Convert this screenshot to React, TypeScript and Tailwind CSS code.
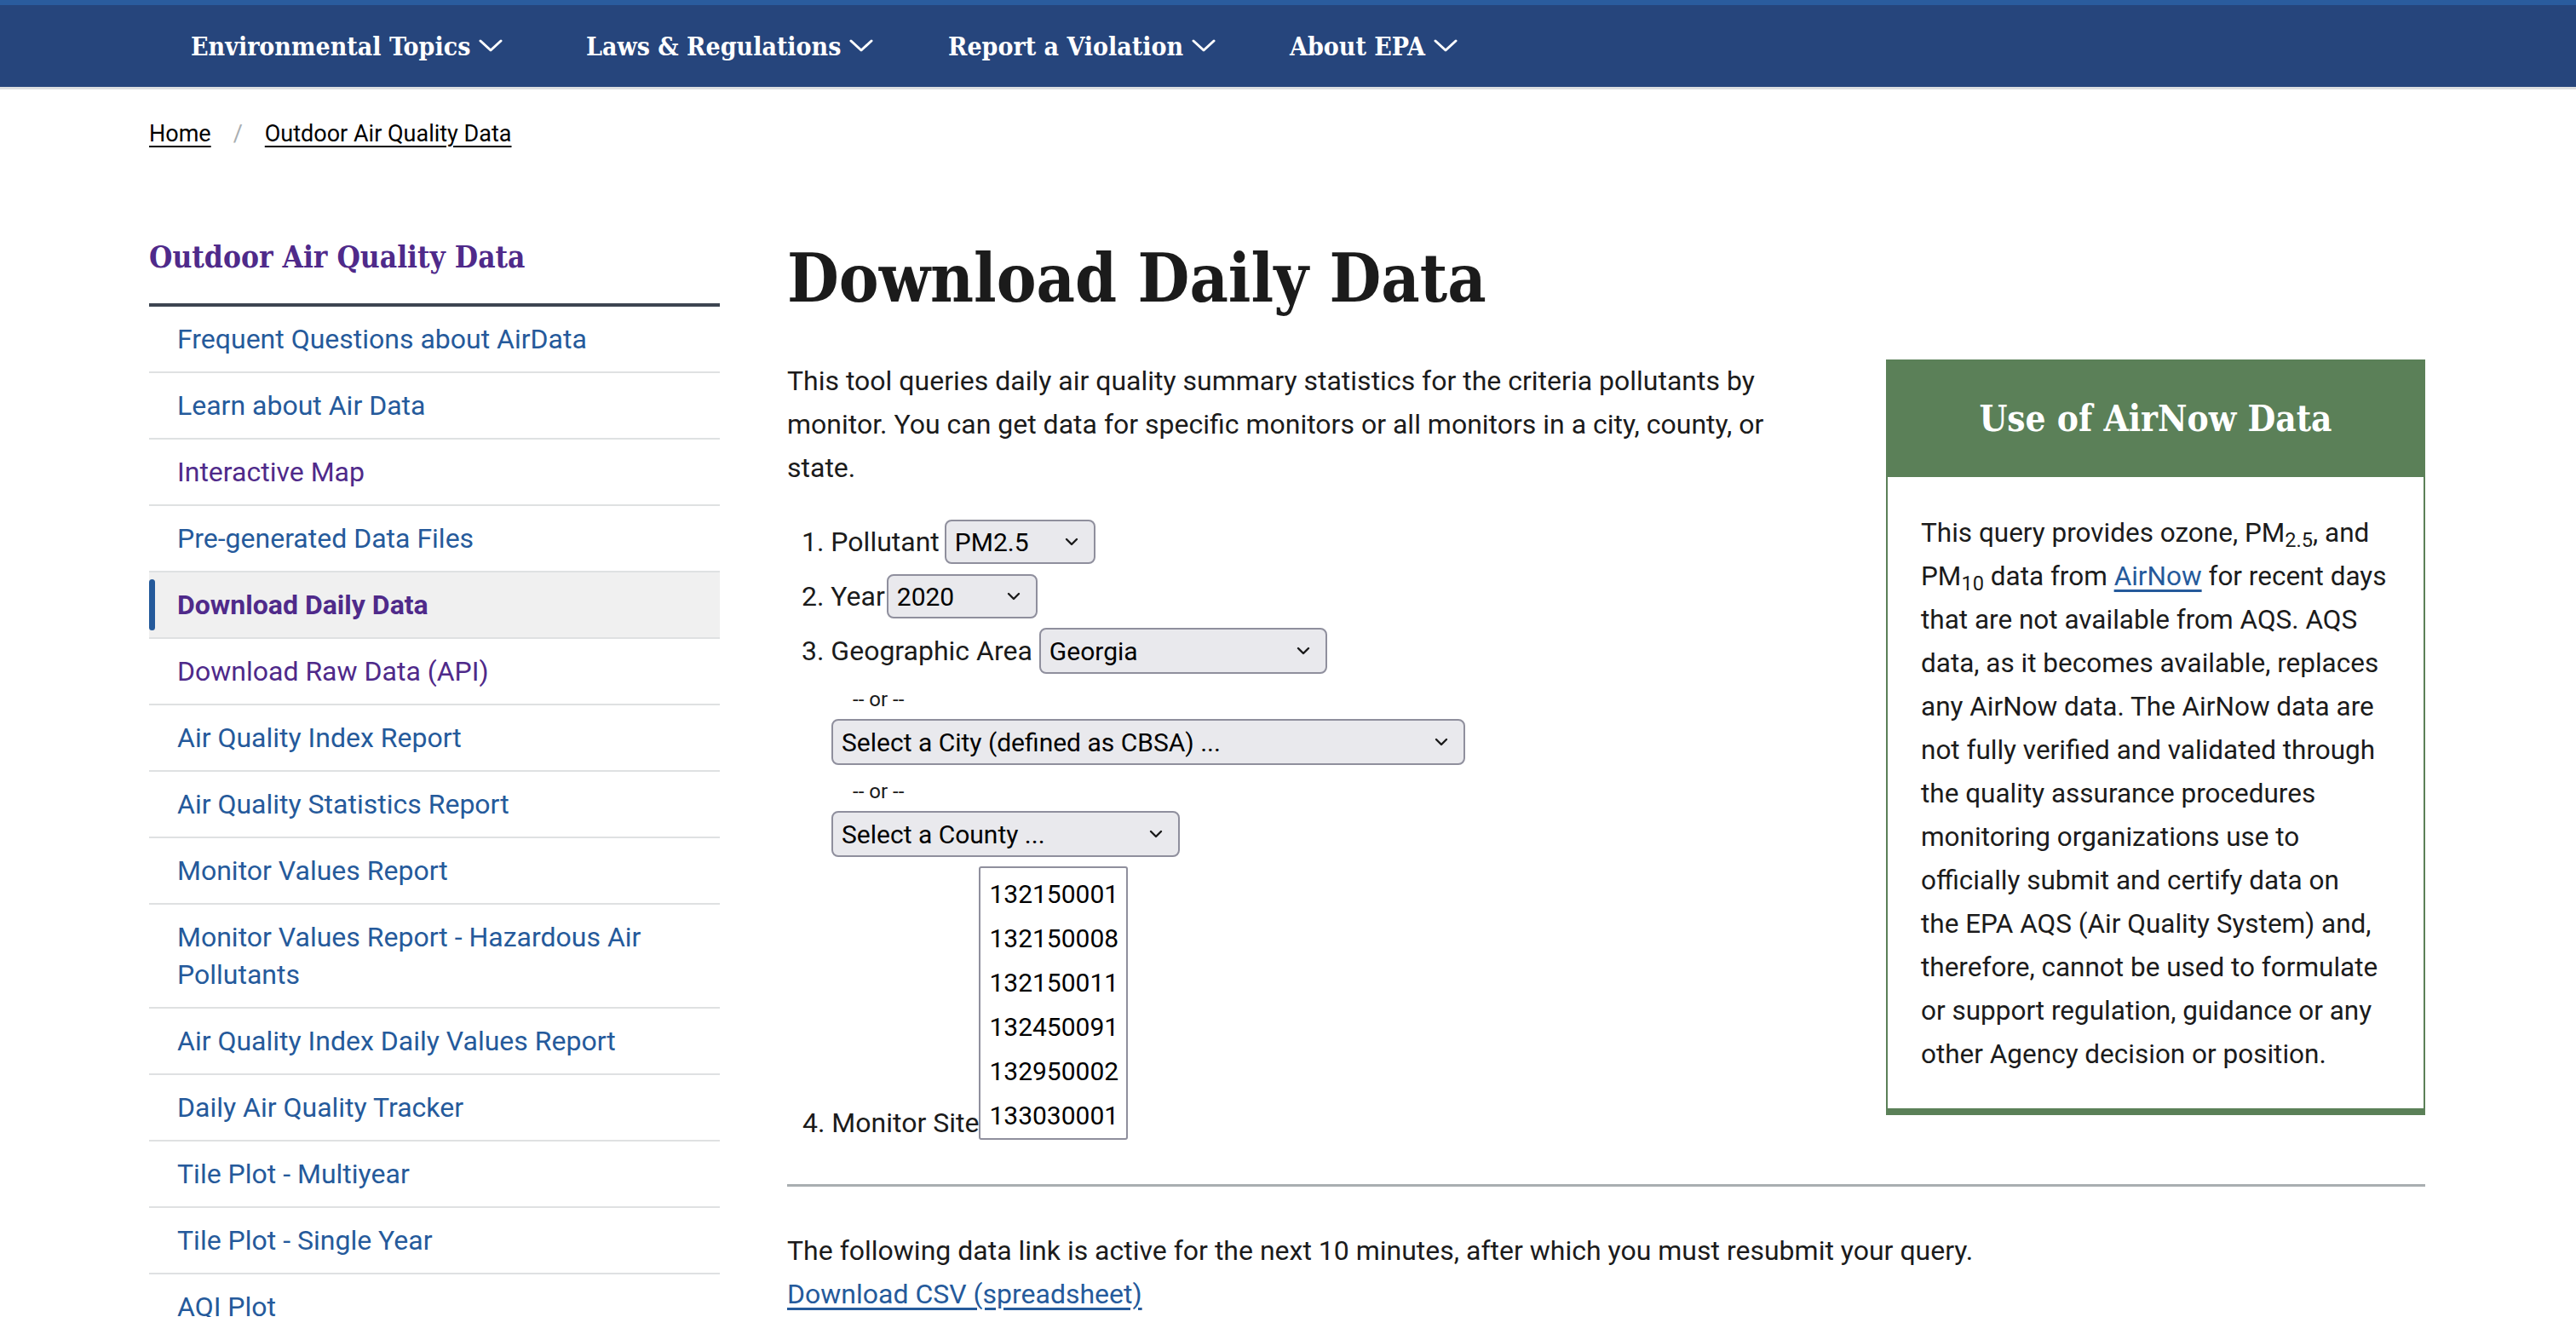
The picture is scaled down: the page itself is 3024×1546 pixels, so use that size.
import React from 'react'

const serif = "font-['DejaVu_Serif_Condensed','DejaVu_Serif',serif]"
const sans = "font-['Roboto',sans-serif]"

function NavChevron() {
  return (
    <svg width="28" height="16" viewBox="0 0 28 16" fill="none" className="ml-[10px]">
      <path d="M2 2 L14 13 L26 2" stroke="white" strokeWidth="3" strokeLinecap="round" strokeLinejoin="round" />
    </svg>
  )
}

function SelectChevron() {
  return (
    <svg width="16" height="10" viewBox="0 0 16 10" fill="none">
      <path d="M2 2 L8 8 L14 2" stroke="#1b1b1b" strokeWidth="2.4" strokeLinecap="round" strokeLinejoin="round" />
    </svg>
  )
}

function FakeSelect({ value, width, height = 'h-[52px]' }: { value: string; width: string; height?: string }) {
  return (
    <div className={`${width} ${height} flex items-center justify-between pl-[10px] pr-[18px] bg-[#e9e9ed] border-2 border-[#8f8f9d] rounded-[8px] text-[30px] text-black`}>
      <span>{value}</span>
      <SelectChevron />
    </div>
  )
}

const navItems = [
  { label: 'Environmental Topics', w: 'w-[464px]' },
  { label: 'Laws & Regulations', w: 'w-[425px]' },
  { label: 'Report a Violation', w: 'w-[401px]' },
  { label: 'About EPA', w: 'w-auto' },
]

const sideLinks: { label: string; visited?: boolean; active?: boolean }[] = [
  { label: 'Frequent Questions about AirData' },
  { label: 'Learn about Air Data' },
  { label: 'Interactive Map', visited: true },
  { label: 'Pre-generated Data Files' },
  { label: 'Download Daily Data', active: true },
  { label: 'Download Raw Data (API)', visited: true },
  { label: 'Air Quality Index Report' },
  { label: 'Air Quality Statistics Report' },
  { label: 'Monitor Values Report' },
  { label: 'Monitor Values Report - Hazardous Air Pollutants' },
  { label: 'Air Quality Index Daily Values Report' },
  { label: 'Daily Air Quality Tracker' },
  { label: 'Tile Plot - Multiyear' },
  { label: 'Tile Plot - Single Year' },
  { label: 'AQI Plot' },
]

const monitors = ['132150001', '132150008', '132150011', '132450091', '132950002', '133030001']

export default function App() {
  return (
    <div className={`min-h-screen bg-white text-[#1b1b1b] ${sans}`}>
      {/* Top navigation */}
      <header className="h-[105px] bg-[#26457c] border-t-[6px] border-[#2a5c9e] border-b-[3px] border-b-[#dcdee0]">
        <nav className={`h-full flex items-center pl-[224px] ${serif} font-bold text-white text-[30px]`}>
          {navItems.map((n) => (
            <div key={n.label} className={`${n.w} flex items-center`}>
              <span>{n.label}</span>
              <NavChevron />
            </div>
          ))}
        </nav>
      </header>

      <div className="pl-[175px] pr-[177px]">
        {/* Breadcrumb */}
        <div className="mt-[32px] h-[40px] flex items-center text-[27px] text-black">
          <a className="underline underline-offset-[5px]">Home</a>
          <span className="mx-[26px] text-[#a9aeb1]">/</span>
          <a className="underline underline-offset-[5px]">Outdoor Air Quality Data</a>
        </div>

        <div className="flex items-start mt-[97px]">
          {/* Side navigation */}
          <aside className="w-[670px] shrink-0">
            <h2 className={`${serif} font-bold text-[35px] leading-[56px] text-[#4f2a8a] pb-[26px] border-b-4 border-[#3d4551]`}>
              Outdoor Air Quality Data
            </h2>
            <ul>
              {sideLinks.map((l) => (
                <li
                  key={l.label}
                  className={`relative border-b-2 border-[#dfe1e2] py-[16px] pl-[33px] pr-[40px] text-[32px] leading-[44px] ${
                    l.active ? 'bg-[#f0f0f0] font-bold text-[#4f2a8a]' : l.visited ? 'text-[#4f2a8a]' : 'text-[#255a9b]'
                  }`}
                >
                  {l.active && <span className="absolute left-0 top-[8px] bottom-[8px] w-[7px] rounded-full bg-[#255a9b]" />}
                  {l.label}
                </li>
              ))}
            </ul>
          </aside>

          {/* Main content */}
          <main className="ml-[79px] flex-1">
            <div className="flex items-start">
              <div className="w-[1190px] shrink-0">
                <h1 className={`${serif} font-bold text-[78px] leading-[96px] mt-[5px] text-[#1b1b1b]`}>Download Daily Data</h1>
                <p className="mt-[47px] text-[32px] leading-[51px]">
                  This tool queries daily air quality summary statistics for the criteria pollutants by monitor. You can get data for specific monitors or all monitors in a city, county, or state.
                </p>

                <div className="mt-[29px] text-[32px]">
                  <div className="h-[64px] flex items-center pl-[17px]">
                    <span className="mr-[6px]">1. Pollutant</span>
                    <FakeSelect value="PM2.5" width="w-[177px]" />
                  </div>
                  <div className="h-[64px] flex items-center pl-[17px]">
                    <span className="mr-[2px]">2. Year</span>
                    <FakeSelect value="2020" width="w-[177px]" />
                  </div>
                  <div className="h-[64px] flex items-center pl-[17px]">
                    <span className="mr-[8px]">3. Geographic Area</span>
                    <FakeSelect value="Georgia" width="w-[338px]" height="h-[54px]" />
                  </div>

                  <div className="pl-[52px]">
                    <div className="mt-[9px] h-[32px] leading-[32px] text-[24px] pl-[25px]">-- or --</div>
                    <div className="mt-[7px]">
                      <FakeSelect value="Select a City (defined as CBSA) ..." width="w-[744px]" height="h-[54px]" />
                    </div>
                    <div className="mt-[15px] h-[32px] leading-[32px] text-[24px] pl-[25px]">-- or --</div>
                    <div className="mt-[7px]">
                      <FakeSelect value="Select a County ..." width="w-[409px]" height="h-[54px]" />
                    </div>
                  </div>

                  <div className="mt-[11px] flex items-end pl-[18px]">
                    <span className="leading-[40px]">4. Monitor Site</span>
                    <div className="w-[175px] border-2 border-[#8f8f9d] rounded-[3px] pt-[5px] bg-white">
                      {monitors.map((m) => (
                        <div key={m} className="h-[52px] leading-[52px] pl-[10px] text-[30px] text-black">{m}</div>
                      ))}
                    </div>
                  </div>
                </div>
              </div>

              {/* AirNow box */}
              <section className="ml-auto w-[633px] mt-[148px]">
                <div className="h-[138px] bg-[#5b8058] flex items-center justify-center">
                  <h3 className={`${serif} font-bold text-white text-[42px]`}>Use of AirNow Data</h3>
                </div>
                <div className="border-x-2 border-b-[8px] border-[#5b8058] pt-[40px] pb-[38px] pl-[39px] pr-[36px] text-[31.5px] leading-[51px]">
                  This query provides ozone, PM<sub>2.5</sub>, and PM<sub>10</sub> data from{' '}
                  <a className="text-[#255a9b] underline underline-offset-[5px]">AirNow</a> for recent days that are not available from AQS. AQS data, as it becomes available, replaces any AirNow data. The AirNow data are not fully verified and validated through the quality assurance procedures monitoring organizations use to officially submit and certify data on
                  <br />
                  the EPA AQS (Air Quality System) and, therefore, cannot be used to formulate or support regulation, guidance or any other Agency decision or position.
                </div>
              </section>
            </div>

            <hr className="mt-[52px] border-t-[3px] border-[#a9aeb1]" />

            <p className="mt-[50px] text-[32px] leading-[51px]">
              The following data link is active for the next 10 minutes, after which you must resubmit your query.
              <br />
              <a className="text-[#255a9b] underline underline-offset-[5px]">Download CSV (spreadsheet)</a>
            </p>
          </main>
        </div>
      </div>
    </div>
  )
}
